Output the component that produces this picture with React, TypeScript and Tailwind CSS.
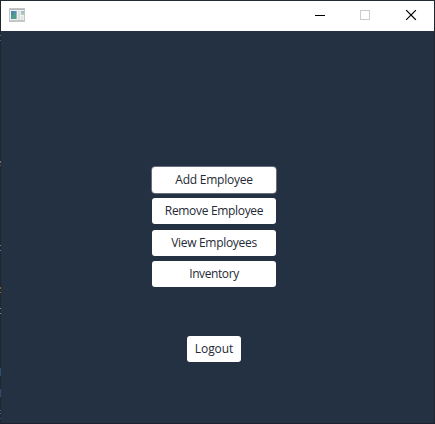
const actions = [
  { label: "Add Employee", style: "tracking-[-0.24px] outline outline-1 outline-white/30" },
  { label: "Remove Employee", style: "mt-[5px] tracking-[-0.32px]" },
  { label: "View Employees", style: "mt-1.5 tracking-[-0.3px]" },
  { label: "Inventory", style: "mt-[5px] tracking-[-0.4px]" },
];

// Fragments of the desktop visible along the window's left edge.
const edgeMarks = [
  { top: 35, height: 1, color: "#66737a" },
  { top: 40, height: 1, color: "#3d6274" },
  { top: 161, height: 2, color: "#77716e" },
  { top: 165, height: 1, color: "#76513a" },
  { top: 245, height: 1, color: "#78818a" },
  { top: 250, height: 1, color: "#687c98" },
  { top: 287, height: 2, color: "#965b18" },
  { top: 292, height: 1, color: "#8a7425" },
  { top: 308, height: 1, color: "#82868a" },
  { top: 313, height: 1, color: "#82868a" },
  { top: 368, height: 8, color: "#304d71" },
  { top: 389, height: 8, color: "#304d71" },
  { top: 410, height: 1, color: "#4a6587" },
  { top: 413, height: 1, color: "#4a6587" },
  { top: 418, height: 1, color: "#3a4f69" },
];

function AppIcon() {
  return (
    <svg width="16" height="14" viewBox="0 0 16 14" shapeRendering="crispEdges">
      <rect width="16" height="14" fill="#c4c5c6" />
      <rect x="1" y="1" width="14" height="1" fill="#b0b8bd" />
      <rect x="1" y="2" width="14" height="10" fill="#f0f0f0" />
      <rect x="2" y="3" width="6" height="8" fill="#5492aa" />
      <rect x="2" y="3" width="3" height="4" fill="#4c85ad" />
      <rect x="4" y="6" width="3" height="5" fill="#4da080" />
      <rect x="7" y="3" width="1" height="8" fill="#93b5bf" />
      <rect x="9" y="3" width="2" height="9" fill="#dedede" />
      <rect x="12" y="3" width="3" height="2" fill="#a2bcd8" />
      <rect x="12" y="5" width="3" height="2" fill="#a4d3b3" />
      <rect x="12" y="8" width="2" height="4" fill="#e3e3e3" />
    </svg>
  );
}

export default function App() {
  return (
    <div className="relative flex h-[424px] w-[435px] flex-col border border-[#20252e] border-t-[#222b38] border-b-[#1f2030] bg-[#243142] font-['Open_Sans','Noto_Sans',sans-serif] text-xs text-[#242a35]">
      <header className="flex h-[30px] shrink-0 items-start justify-between bg-white pl-2 pt-[7px]">
        <AppIcon />
        <div className="flex pr-[15px]">
          <svg width="104" height="16" viewBox="0 0 104 16" fill="none">
            <path d="M0 7.5h10" stroke="#000" />
            <rect x="45.5" y="2.5" width="9" height="9" stroke="#ccc" />
            <path d="m91.5 2.5 9 9m0-9-9 9" stroke="#000" strokeWidth="1.1" strokeLinecap="square" />
          </svg>
        </div>
      </header>
      <main className="flex flex-col items-center pr-[7px] pt-[136px]">
        {actions.map(({ label, style }) => (
          <button key={label} className={`h-[26px] w-[124px] rounded-[3px] bg-white leading-[26px] ${style}`}>
            {label}
          </button>
        ))}
        <button className="mt-[49px] h-[26px] w-[54px] rounded-[3px] bg-white leading-[26px] tracking-[-0.1px]">Logout</button>
      </main>
      {edgeMarks.map(({ top, height, color }) => (
        <span key={top} className="absolute -left-px w-px" style={{ top: top - 1, height, backgroundColor: color }} />
      ))}
    </div>
  );
}
